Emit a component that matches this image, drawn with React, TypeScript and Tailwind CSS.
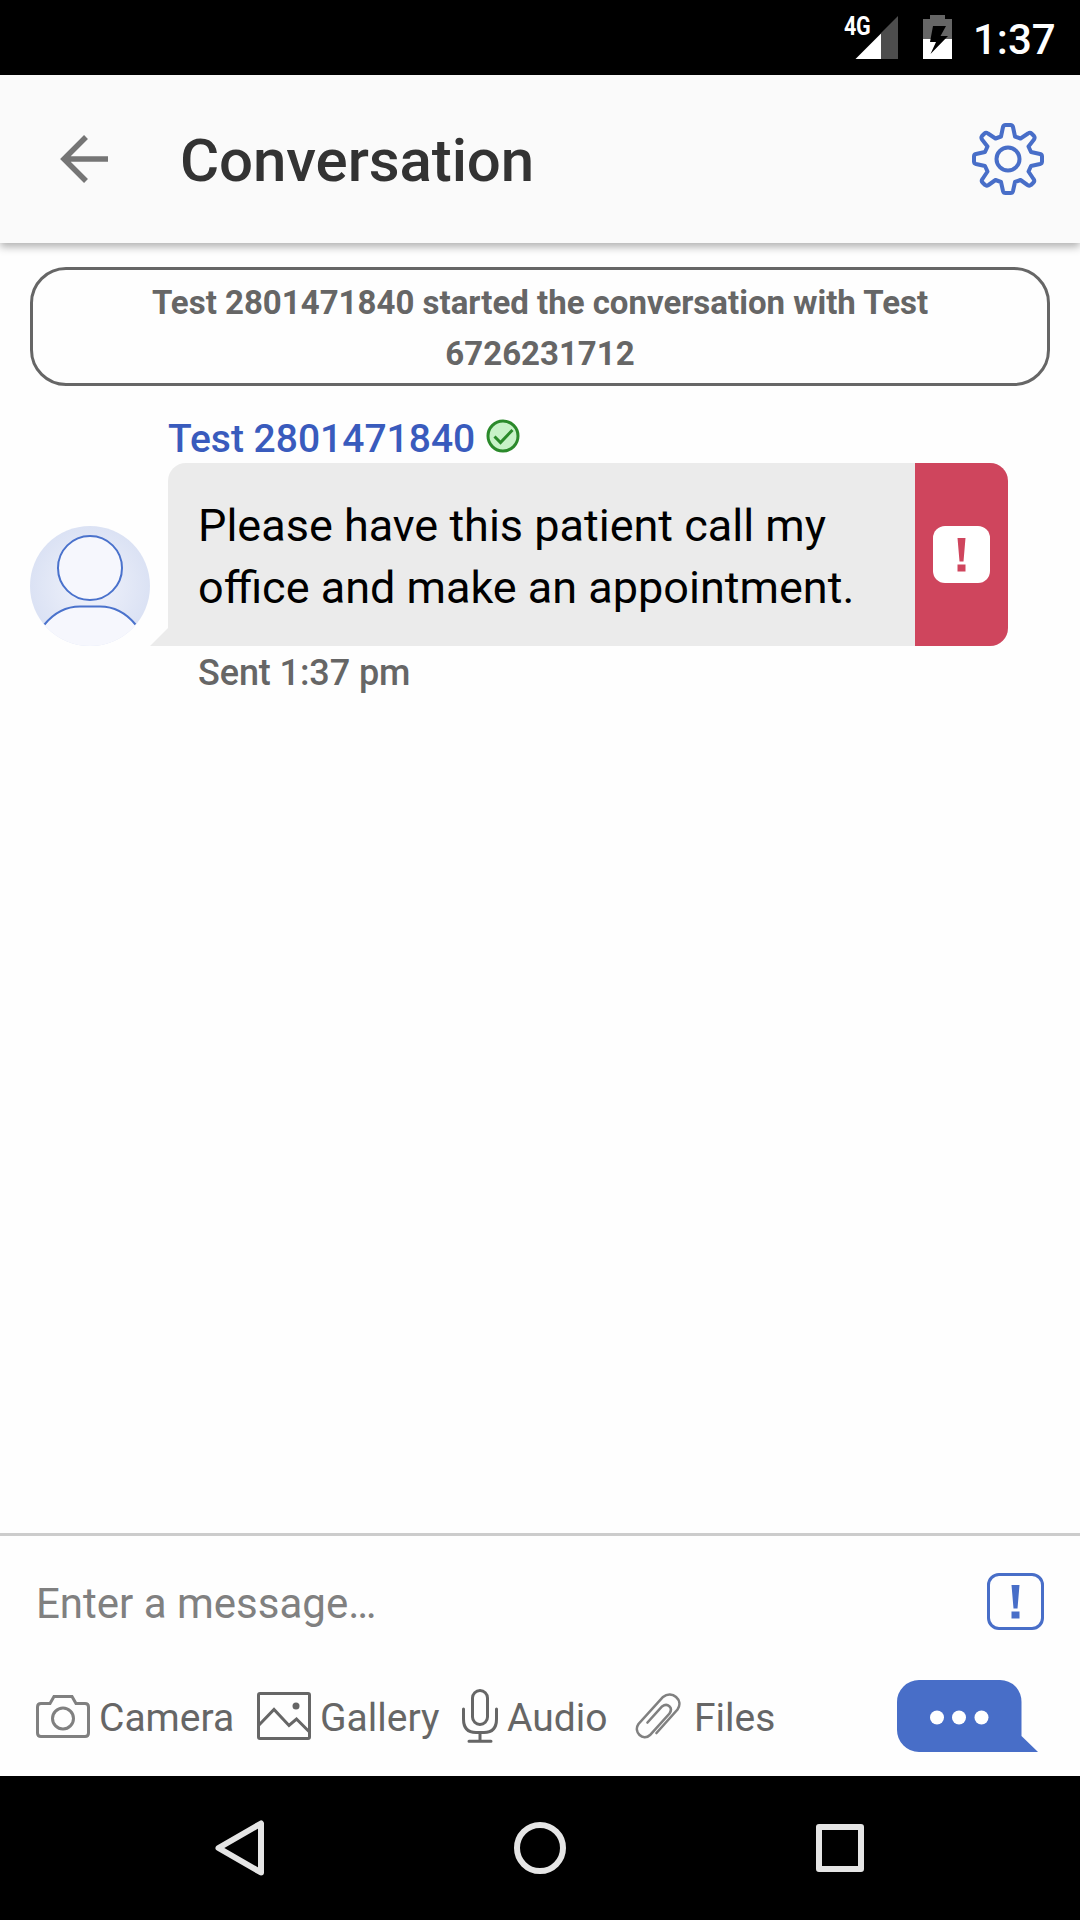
import React from "react";

function StatusBar() {
  return (
    <div className="flex h-[75px] items-start bg-black text-white">
      <div className="relative ml-[844px] mt-[15px] h-11 w-[54px]">
        <span className="absolute left-0 top-0 text-[25px] font-bold leading-[24px] tracking-[-0.5px] origin-left scale-x-[0.86]">4G</span>
        <svg className="h-11 w-[54px]" viewBox="0 0 54 44">
          <path d="M54 1V44H37V18Z" fill="#4d4d4d" />
          <path d="M11.500 44L37 18.500V44Z" fill="#fff" />
        </svg>
      </div>
      <svg className="ml-[25px] mt-[15px] h-11 w-[29px]" viewBox="0 0 29 44">
        <path d="M0 4H7V0H22V4H29V24H0Z" fill="#666" />
        <path d="M0 24H29V44H0Z" fill="#fff" />
        <path d="M10 11H23L17.500 21H25L7.500 39L13 27H7Z" fill="#000" />
      </svg>
      <span className="ml-[21px] mt-[15px] text-[42px] font-medium leading-[50px]">1:37</span>
    </div>
  );
}

function GearIcon() {
  return (
    <svg className="h-[72px] w-[72px]" viewBox="-36 -36 72 72" fill="none" stroke="#486ec8" strokeWidth="4">
      <circle r="11.500" />
      <path
        strokeLinejoin="round"
        d="M-2.500 -34H2.500Q4.500 -34 5 -32L7 -22.500L12.500 -20.500L20 -25.500Q22 -27 23.500 -25.500L26 -23Q27.200 -21.500 26 -19.500L20.500 -12.500L23 -7L32 -5Q34 -4.500 34 -2.500V2.500Q34 4.500 32 5L23 7L20.500 12.500L25.500 20Q27 22 25.500 23.500L23 26Q21.500 27.200 19.500 26L12.500 21L7 23L5 32Q4.500 34 2.500 34H-2.500Q-4.500 34 -5 32L-7 23L-12.500 21L-19.500 26Q-21.500 27.200 -23 26L-25.500 23.500Q-27 22 -25.500 20L-20.500 12.500L-23 7L-32 5Q-34 4.500 -34 2.500V-2.500Q-34 -4.500 -32 -5L-23 -7L-20.500 -12.500L-26 -19.500Q-27.200 -21.500 -26 -23L-23.500 -25.500Q-22 -27 -20 -25.500L-12.500 -20.500L-7 -22.500L-5 -32Q-4.500 -34 -2.500 -34Z"
      />
    </svg>
  );
}

function Header() {
  return (
    <header className="relative flex h-[168px] items-center bg-[#fafafa] pl-[60px] pr-9 shadow-[0_4px_8px_0_rgba(0,0,0,0.3)]">
      <svg className="h-12 w-12" viewBox="0 0 48 48" fill="none" stroke="#757575" strokeWidth="5.500">
        <path d="M48 24H5M26 2L4 24L26 46" />
      </svg>
      <h1 className="ml-[72px] pt-[3px] text-[60px] font-medium leading-[72px] tracking-[-0.1px] text-[#333]">Conversation</h1>
      <div className="ml-auto">
        <GearIcon />
      </div>
    </header>
  );
}

function Avatar() {
  return (
    <svg className="h-[120px] w-[120px]" viewBox="0 0 120 120">
      <defs>
        <radialGradient id="avatarFill">
          <stop offset="0" stopColor="#f1f3fb" />
          <stop offset="1" stopColor="#dbe2f4" />
        </radialGradient>
        <clipPath id="avatarClip">
          <circle cx="60" cy="60" r="60" />
        </clipPath>
      </defs>
      <g clipPath="url(#avatarClip)">
        <rect width="120" height="120" fill="url(#avatarFill)" />
        <path d="M8 106C18 91 32 80.500 50 80.500H70C88 80.500 102 91 112 106V120H8Z" fill="#f6f7fd" />
        <path d="M14.500 98.500C24 87 36 80.500 50 80.500H70C84 80.500 96 87 105.500 98.500" fill="none" stroke="#4a72cc" strokeWidth="2" />
        <circle cx="60" cy="42" r="32" fill="#f6f7fd" stroke="#4a72cc" strokeWidth="2" />
      </g>
    </svg>
  );
}

function Bang() {
  return (
    <svg className="h-[34px] w-[9px]" viewBox="0 0 9 34" fill="currentColor">
      <path d="M.5 0H8.500L6.500 23.500H2.500ZM.5 26.500H8.500V33.500H.5Z" />
    </svg>
  );
}

function Message() {
  return (
    <div className="mt-7">
      <div className="mb-1 ml-[138px] flex h-[45px] items-center">
        <span className="pt-1 text-[39px] font-medium leading-[44px] text-[#395bbd]">Test 2801471840</span>
        <svg className="mb-[9px] ml-[11px] mt-2 h-[34px] w-[34px]" viewBox="0 0 34 34" fill="none" stroke="#2b8a2b" strokeWidth="3">
          <circle cx="17" cy="17" r="15" fill="#c8f2c8" />
          <path d="M8.500 17.500L14.500 23.500L26.500 11" />
        </svg>
      </div>
      <div className="flex items-end">
        <Avatar />
        <svg className="h-[18px] w-[18px]" viewBox="0 0 18 18">
          <path d="M18 0V18H0Z" fill="#ebebeb" />
        </svg>
        <div className="flex h-[183px] w-[840px] overflow-hidden rounded-[18px] rounded-bl-none bg-[#ebebeb]">
          <p className="w-[747px] pl-[30px] pt-8 text-[45px] leading-[62px] text-black">
            Please have this patient call my
            <br />
            office and make an appointment.
          </p>
          <div className="flex w-[93px] justify-center bg-[#cf455d]">
            <div className="mt-[63px] flex h-[57px] w-[57px] justify-center rounded-xl bg-white pt-3 text-[#cf455d]">
              <Bang />
            </div>
          </div>
        </div>
      </div>
      <div className="ml-[168px] mt-[5px] text-[36px] font-medium leading-[44px] tracking-[-0.1px] text-[#666]">Sent 1:37 pm</div>
    </div>
  );
}

function CameraIcon() {
  return (
    <svg className="h-[45px] w-[54px] shrink-0" viewBox="0 0 54 45" fill="none" stroke="#808080" strokeWidth="3">
      <path d="M5 9.500H14L18 2.500H36L40 9.500H49Q52.500 9.500 52.500 13V39Q52.500 42.500 49 42.500H5Q1.500 42.500 1.500 39V13Q1.500 9.500 5 9.500Z" />
      <circle cx="27" cy="24.500" r="10.500" />
    </svg>
  );
}

function GalleryIcon() {
  return (
    <svg className="h-12 w-[54px] shrink-0" viewBox="0 0 54 48" fill="none" stroke="#666" strokeWidth="3">
      <rect x="1.500" y="1.500" width="51" height="45" rx="1.500" />
      <path d="M2 33L17 17.500L32 33.500L39.500 27L53 40.500" />
      <circle cx="39" cy="14" r="3.500" fill="#666" stroke="none" />
    </svg>
  );
}

function MicIcon() {
  return (
    <svg className="h-[54px] w-9 shrink-0" viewBox="0 0 36 54" fill="none" stroke="#666" strokeWidth="3" strokeLinecap="round">
      <rect x="10.500" y="1.500" width="15" height="34" rx="7.500" />
      <path d="M1.500 20V30Q1.500 43.500 14 43.500H22Q34.500 43.500 34.500 30V20M18 43.500V52M7 52.300H29" />
    </svg>
  );
}

function ClipIcon() {
  return (
    <svg className="h-[46px] w-[46px] shrink-0" viewBox="0 0 46 46" fill="none" stroke="#808080" strokeWidth="2.600" strokeLinecap="round">
      <path d="M21.500 40L42.500 16.500C49 7 37 -3 28 4L3.500 31C-2 39 8 48.500 15 42L34.500 20.500C38.500 14.500 32.500 9.500 27 13.500L12.500 29.500" />
    </svg>
  );
}

function Composer() {
  return (
    <div className="h-[243px] border-t-[3px] border-[#ccc]">
      <div className="flex h-[132px] justify-between pl-9 pr-9 pt-[37px]">
        <span className="pt-[6px] text-[42px] leading-[50px] text-[#808080]">Enter a message…</span>
        <div className="flex h-[57px] w-[57px] justify-center rounded-xl border-[3px] border-[#486ec8] pt-[9px] text-[#486ec8]">
          <Bang />
        </div>
      </div>
      <div className="flex h-[96px] items-center text-[39px] leading-[48px] text-[#666]">
        <div className="flex w-[257px] items-center pl-9">
          <CameraIcon />
          <span className="ml-[9px] pt-1">Camera</span>
        </div>
        <div className="flex w-[205px] items-center">
          <GalleryIcon />
          <span className="ml-[9px] pt-1">Gallery</span>
        </div>
        <div className="flex w-[173px] items-center">
          <MicIcon />
          <span className="ml-[9px] pt-1">Audio</span>
        </div>
        <div className="flex items-center">
          <ClipIcon />
          <span className="ml-[13px] pt-1">Files</span>
        </div>
        <svg className="ml-auto mr-[42px] h-[72px] w-[141px]" viewBox="0 0 141 72">
          <path d="M22 0H103Q112 0 118.500 6.500Q124.500 13 124.500 22V56L141 72H22Q13 72 6.500 65.500Q0 59 0 50V22Q0 13 6.500 6.500Q13 0 22 0Z" fill="#486ec8" />
          <g fill="#fff">
            <circle cx="40" cy="37.500" r="7" />
            <circle cx="62" cy="37.500" r="7" />
            <circle cx="84.500" cy="37.500" r="7" />
          </g>
        </svg>
      </div>
    </div>
  );
}

function NavBar() {
  return (
    <nav className="flex h-36 items-center justify-center gap-[240px] bg-black">
      <svg className="h-[60px] w-[60px]" viewBox="0 0 60 60" fill="none" stroke="#e5e5e5" strokeWidth="6" strokeLinejoin="round">
        <path d="M51 5.500V54.500L8.500 30Z" />
      </svg>
      <svg className="h-[60px] w-[60px]" viewBox="0 0 60 60" fill="none" stroke="#e5e5e5" strokeWidth="6">
        <circle cx="30" cy="30" r="23" />
      </svg>
      <svg className="h-[60px] w-[60px]" viewBox="0 0 60 60" fill="none" stroke="#e5e5e5" strokeWidth="6" strokeLinejoin="round">
        <rect x="9" y="9" width="42" height="42" />
      </svg>
    </nav>
  );
}

export default function App() {
  return (
    <div className="flex h-[1920px] w-[1080px] flex-col overflow-hidden bg-[#fefefe] font-['Roboto',sans-serif]">
      <StatusBar />
      <Header />
      <main className="flex-1 px-[30px] pt-6">
        <div className="h-[119px] rounded-[36px] border-[3px] border-[#666] pt-[7px] text-center text-[33px] font-bold leading-[51px] text-[#666]">
          Test 2801471840 started the conversation with Test
          <br />
          6726231712
        </div>
        <Message />
      </main>
      <Composer />
      <NavBar />
    </div>
  );
}
